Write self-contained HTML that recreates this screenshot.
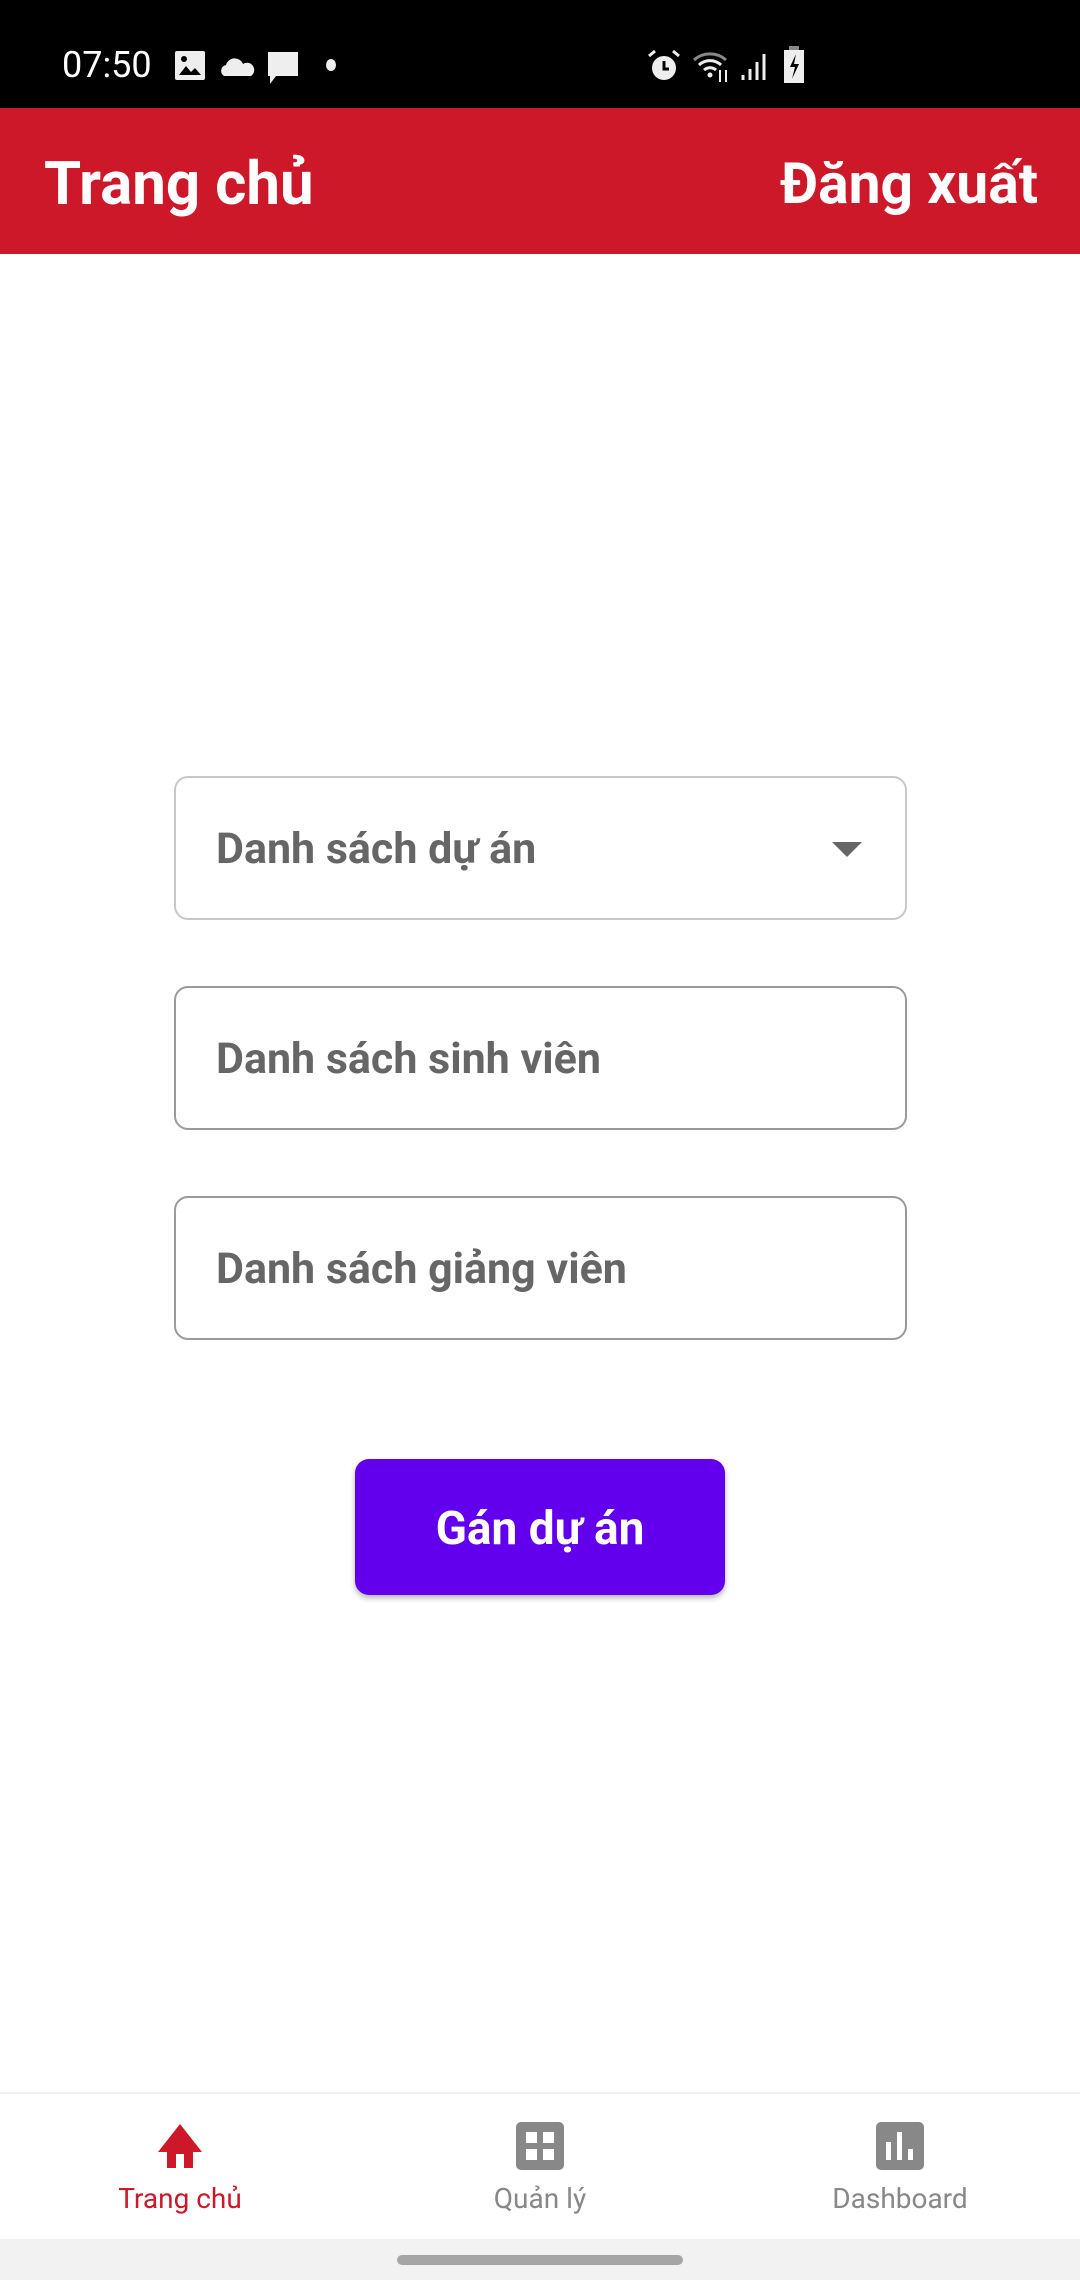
<!DOCTYPE html>
<html><head><meta charset="utf-8"><style>
*{margin:0;padding:0;box-sizing:border-box}
body{width:1080px;height:2280px;background:#fff;font-family:"Roboto","Liberation Sans",sans-serif;position:relative;overflow:hidden}
.sb{position:absolute;top:0;left:0;width:1080px;height:108px;background:#000;color:#fff}
.bar{position:absolute;top:108px;left:0;width:1080px;height:146px;background:#cc1829;color:#fff;font-weight:bold;font-size:60px}
.field{position:absolute;left:174px;width:733px;height:144px;border:2.5px solid #9a9a9a;border-radius:14px;font-size:43px;font-weight:bold;color:#666;padding-left:40px;line-height:143px}
.btn{position:absolute;left:355px;top:1459px;width:370px;height:136px;background:#6200ee;border-radius:14px;color:#fff;font-size:46px;font-weight:bold;text-align:center;line-height:140px;box-shadow:0 3px 6px rgba(0,0,0,.3)}
.nav{position:absolute;top:2092px;left:0;width:1080px;height:147px;border-top:2px solid #f0f0f0;background:#fff}
.item{position:absolute;top:0;width:360px;text-align:center;font-size:28px;color:#888}
.item svg{position:absolute;top:28px;left:156px}
.item span{position:absolute;top:88px;left:0;width:360px}
</style></head><body>
<div class="sb">
<div style="position:absolute;left:62px;top:44px;font-size:36px;">07:50</div>
<svg style="position:absolute;left:174px;top:50px" width="34" height="32"><rect x="1" y="1" width="30" height="29" rx="2" fill="#eee"/><path d="M5 25l7-9 5 6 4-4 6 7z" fill="#000"/><circle cx="10" cy="9" r="3" fill="#000"/></svg>
<svg style="position:absolute;left:220px;top:54px" width="36" height="24"><path d="M4 22a6 6 0 0 1 2-11 9 9 0 0 1 17-1 6 6 0 0 1 8 12z" fill="#eee"/></svg>
<svg style="position:absolute;left:266px;top:50px" width="36" height="38"><path d="M2 2h30v24H10l-6 8V26H2z" fill="#eee"/></svg>
<div style="position:absolute;left:326px;top:59px;width:10px;height:12px;border-radius:50%;background:#eee"></div>
<svg style="position:absolute;left:646px;top:48px" width="36" height="36"><circle cx="18" cy="20" r="12" fill="#eee"/><path d="M18 13v8h5" stroke="#000" stroke-width="3" fill="none"/><path d="M3 8l6-5M33 8l-6-5" stroke="#eee" stroke-width="3"/></svg>
<svg style="position:absolute;left:692px;top:48px" width="40" height="36"><path d="M2 12a24 24 0 0 1 32 0" stroke="#888" stroke-width="3" fill="none"/><path d="M7 17a16 16 0 0 1 22 0M12 22a9 9 0 0 1 12 0" stroke="#eee" stroke-width="3" fill="none"/><circle cx="18" cy="27" r="2.5" fill="#eee"/><path d="M28 22v12M34 34V22" stroke="#eee" stroke-width="2"/></svg>
<svg style="position:absolute;left:740px;top:50px" width="30" height="32"><path d="M3 30v-5M10 30V19M17 30V12M24 30V4" stroke="#eee" stroke-width="3"/></svg>
<svg style="position:absolute;left:782px;top:46px" width="24" height="38"><rect x="7" y="0" width="10" height="4" fill="#888"/><rect x="2" y="4" width="20" height="33" fill="#eee"/><path d="M14 8l-6 13h5l-3 12 7-15h-5z" fill="#000"/></svg>
</div>
<div class="bar">
<div style="position:absolute;left:44px;top:40px">Trang chủ</div>
<div style="position:absolute;right:42px;top:42px;font-size:57px">Đăng xuất</div>
</div>
<div class="field" style="top:776px;border-color:#c8c8c8">Danh sách dự án
<svg style="position:absolute;left:656px;top:64px" width="30" height="16"><path d="M0 0h30L15 15z" fill="#666"/></svg></div>
<div class="field" style="top:986px">Danh sách sinh viên</div>
<div class="field" style="top:1196px">Danh sách giảng viên</div>
<div class="btn">Gán dự án</div>
<div class="nav">
<div class="item" style="left:0;color:#cc1829"><svg width="48" height="48" viewBox="0 0 48 48"><path d="M24 2L2 30h9v16h9V32h8v14h9V30h9z" fill="#cc1829"/></svg><span>Trang chủ</span></div>
<div class="item" style="left:360px"><svg width="48" height="48" viewBox="0 0 48 48"><rect x="0" y="0" width="48" height="48" rx="5" fill="#888"/><rect x="10" y="10" width="11" height="11" fill="#fff"/><rect x="27" y="10" width="11" height="11" fill="#fff"/><rect x="10" y="27" width="11" height="11" fill="#fff"/><rect x="27" y="27" width="11" height="11" fill="#fff"/></svg><span>Quản lý</span></div>
<div class="item" style="left:720px"><svg width="48" height="48" viewBox="0 0 48 48"><rect x="0" y="0" width="48" height="48" rx="5" fill="#888"/><rect x="10" y="20" width="5" height="18" fill="#fff"/><rect x="21" y="10" width="5" height="28" fill="#fff"/><rect x="32" y="27" width="5" height="11" fill="#fff"/></svg><span>Dashboard</span></div>
</div>
<div style="position:absolute;top:2239px;left:0;width:1080px;height:41px;background:#f2f2f2"></div>
<div style="position:absolute;top:2255px;left:397px;width:286px;height:10px;border-radius:5px;background:#a6a6a6"></div>
</body></html>
